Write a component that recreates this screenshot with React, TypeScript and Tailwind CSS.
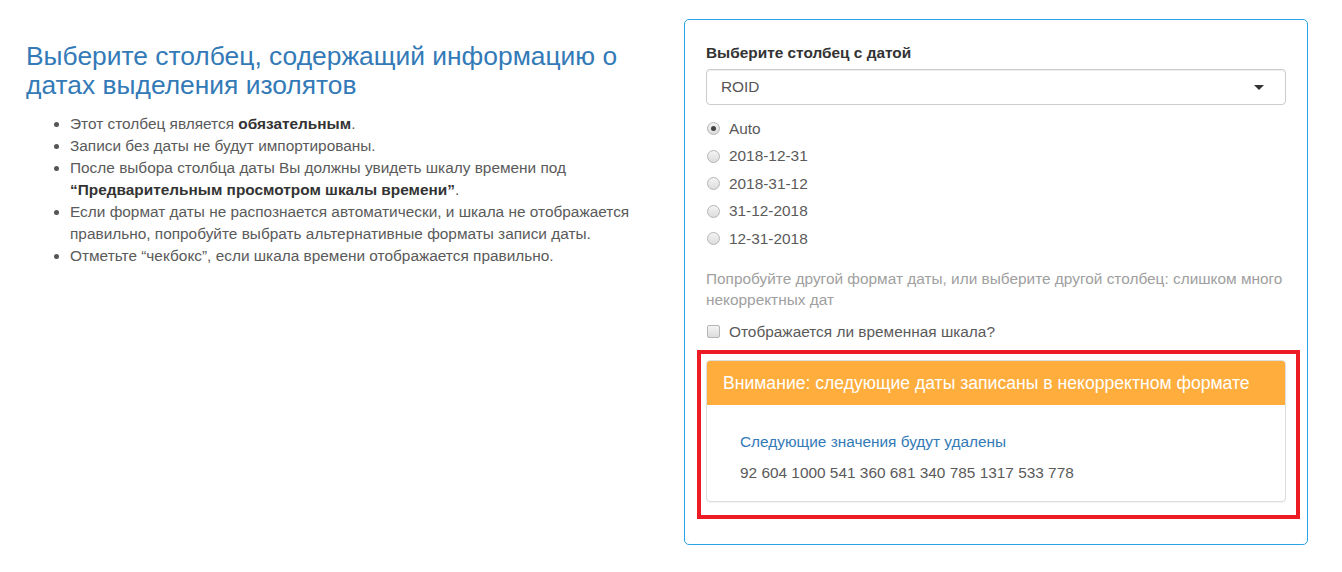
import React from "react"

const bullets: React.ReactNode[] = [
  <>Этот столбец является <b className="text-[#333]">обязательным</b>.</>,
  <>Записи без даты не будут импортированы.</>,
  <>
    После выбора столбца даты Вы должны увидеть шкалу времени под{" "}
    <b className="text-[#333]">“Предварительным просмотром шкалы времени”</b>.
  </>,
  <>
    Если формат даты не распознается автоматически, и шкала не отображается
    правильно, попробуйте выбрать альтернативные форматы записи даты.
  </>,
  <>Отметьте “чекбокс”, если шкала времени отображается правильно.</>,
]

const formats = ["Auto", "2018-12-31", "2018-31-12", "31-12-2018", "12-31-2018"]

function Radio({ checked }: { checked?: boolean }) {
  return (
    <span className="flex h-[13px] w-[13px] shrink-0 items-center justify-center rounded-full border border-[#b5b5b5] bg-gradient-to-b from-[#f4f4f4] to-[#dcdcdc]">
      {checked && <span className="h-[5px] w-[5px] rounded-full bg-[#444]" />}
    </span>
  )
}

export default function App() {
  return (
    <div
      className="flex w-[1342px] min-h-[572px] bg-white text-[15.4px] leading-[22px] text-[#5a5a5a]"
      style={{ fontFamily: '"Liberation Sans", Arial, sans-serif' }}
    >
      {/* Left column */}
      <div className="w-[658px] shrink-0 pl-[26px] pr-[26px]">
        <h3 className="mt-[42px] text-[26.4px] leading-[29px] text-[#337ab7]">
          Выберите столбец, содержащий информацию о датах выделения изолятов
        </h3>
        <ul className="mt-[13px] list-disc pl-[44px]">
          {bullets.map((b, i) => (
            <li key={i} className="marker:text-[#555]">
              {b}
            </li>
          ))}
        </ul>
      </div>

      {/* Right panel */}
      <div className="ml-[26px] mt-[19px] h-[526px] w-[624px] shrink-0 rounded-[5px] border border-[#29a3e3] px-[21px] pt-[22px]">
        <label className="block font-bold text-[#333]">Выберите столбец с датой</label>
        <div className="mt-[5px] flex h-[36px] items-center justify-between rounded-[4px] border border-[#ccc] bg-white pl-[14px] pr-[21px] text-[#555] shadow-[inset_0_1px_1px_rgba(0,0,0,0.075)]">
          <span>ROID</span>
          <span className="h-0 w-0 border-x-[5px] border-t-[5px] border-x-transparent border-t-[#333]" />
        </div>

        <div className="mt-[10px]">
          {formats.map((f, i) => (
            <div key={f} className="flex h-[27.5px] items-center gap-[9px] pl-[1px]">
              <Radio checked={i === 0} />
              <span>{f}</span>
            </div>
          ))}
        </div>

        <p className="mt-[15px] leading-[21px] text-[#a0a0a0]">
          Попробуйте другой формат даты, или выберите другой столбец: слишком много
          некорректных дат
        </p>

        <div className="mt-[12px] flex h-[20px] items-center gap-[9px] pl-[1px]">
          <span className="h-[13px] w-[13px] shrink-0 rounded-[2px] border border-[#b5b5b5] bg-gradient-to-b from-[#f4f4f4] to-[#dcdcdc]" />
          <span>Отображается ли временная шкала?</span>
        </div>

        {/* Highlighted warning */}
        <div className="-ml-[9px] -mr-[14px] mt-[8px] border-4 border-[#ed1c24] pb-[13px] pl-[5px] pr-[10px] pt-[6px]">
          <div className="overflow-hidden rounded-[4px] border border-[#ddd] shadow-[0_1px_1px_rgba(0,0,0,0.05)]">
            <div className="flex h-[44px] items-center bg-[#ffad3d] px-[16px] text-[17.6px] text-white">
              Внимание: следующие даты записаны в некорректном формате
            </div>
            <div className="pb-[17px] pl-[33px] pt-[26px]">
              <div className="text-[#337ab7]">Следующие значения будут удалены</div>
              <div className="mt-[9px]">
                92 604 1000 541 360 681 340 785 1317 533 778
              </div>
            </div>
          </div>
        </div>
      </div>
    </div>
  )
}
